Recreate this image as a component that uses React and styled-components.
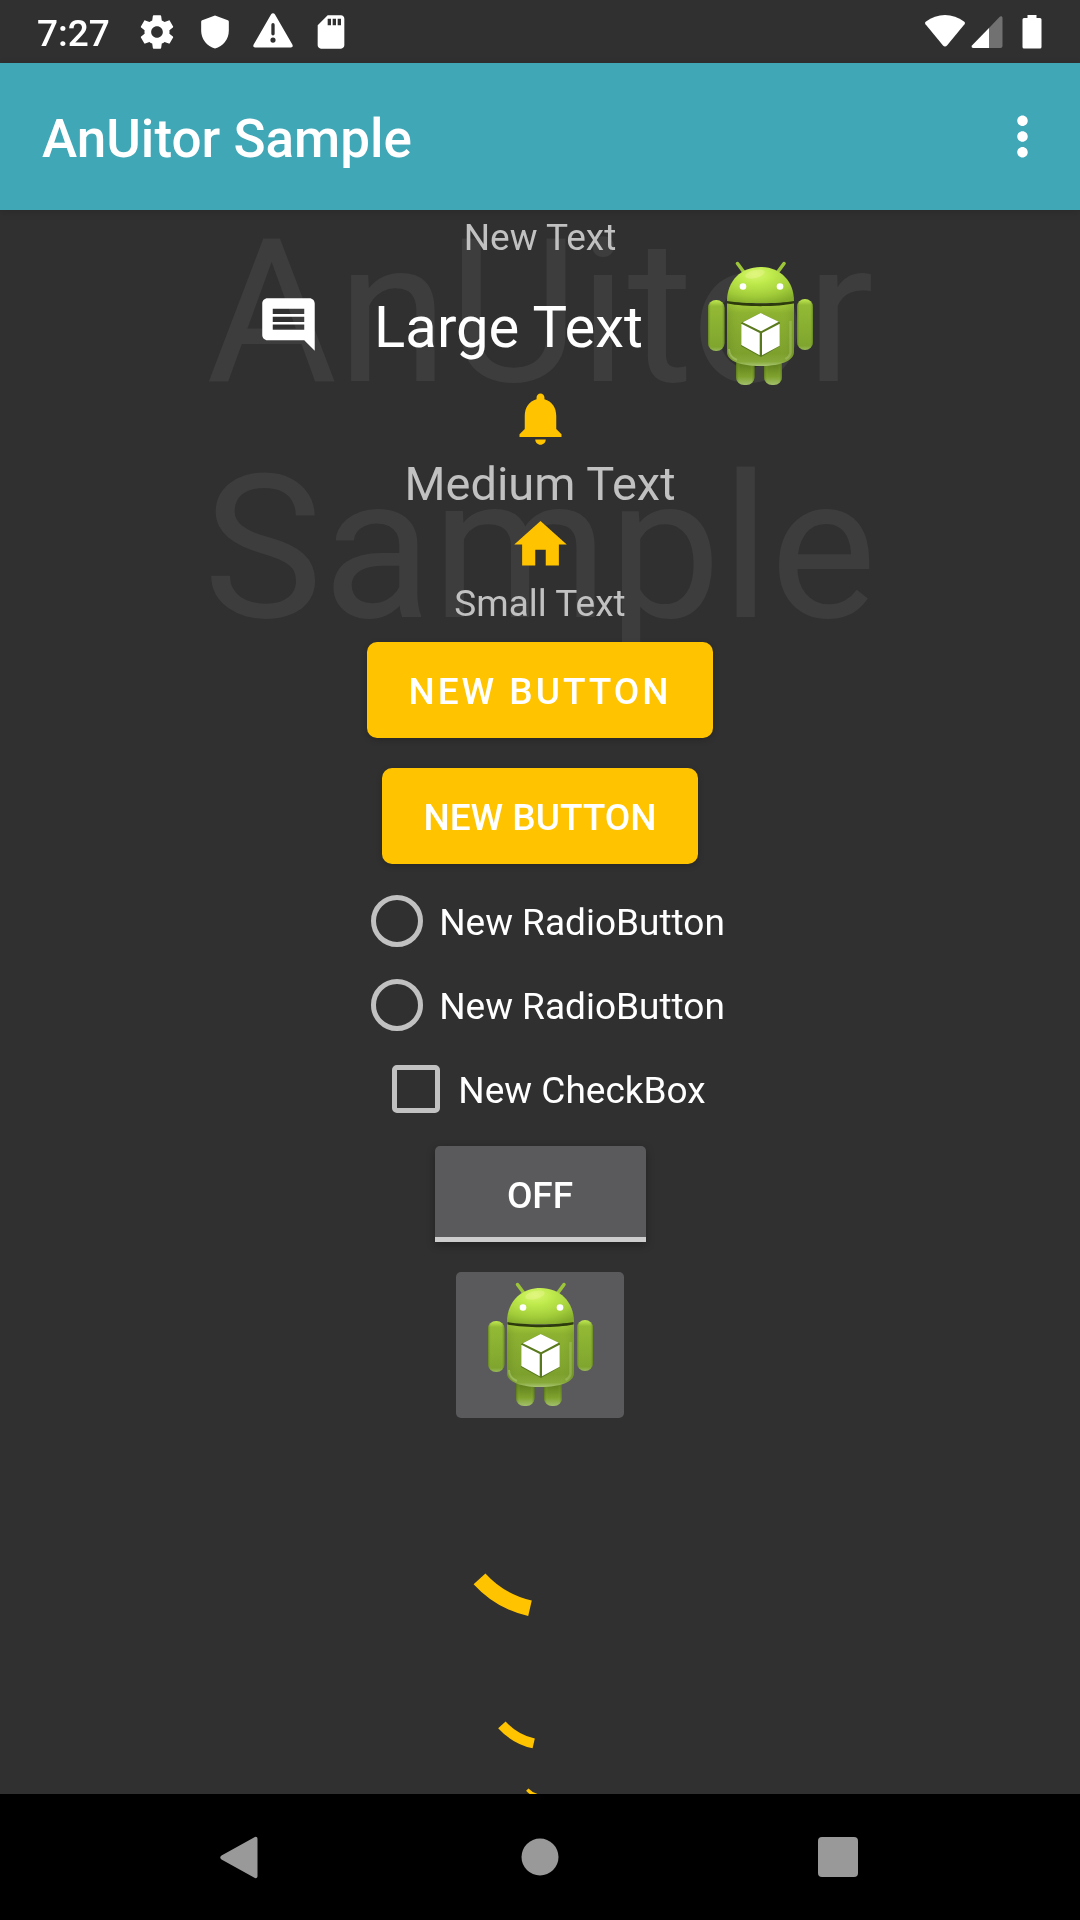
import React from "react";
import styled, { createGlobalStyle, css } from "styled-components";

const color = {
  background: "#303030",
  primary: "#40a7b7",
  accent: "#ffc300",
  text: "#ffffff",
  textSecondary: "#c1c1c1",
  control: "#5a5a5c",
  watermark: "#3d3d3d",
  nav: "#999999",
};

const GlobalStyle = createGlobalStyle`
  * { box-sizing: border-box; }
  body {
    margin: 0;
    background: ${color.background};
    color: ${color.text};
    font-family: Roboto, "Noto Sans", sans-serif;
    font-size: 37px;
  }
  button, input { font: inherit; color: inherit; }
  svg { display: block; flex: none; }
`;

const Screen = styled.div`
  display: flex;
  flex-direction: column;
  height: 100vh;
  overflow: hidden;
`;

const StatusBar = styled.div`
  flex: none;
  display: flex;
  align-items: center;
  justify-content: space-between;
  height: 63px;
  padding: 0 38px 0 37px;
`;

const StatusGroup = styled.div`
  display: flex;
  align-items: center;
  gap: ${(p) => p.$gap}px;
`;

const Clock = styled.time`
  padding: 4px 9px 0 0;
  font-weight: 500;
  line-height: 44px;
`;

const AppBar = styled.header`
  position: relative;
  z-index: 1;
  flex: none;
  display: flex;
  align-items: center;
  justify-content: space-between;
  height: 147px;
  padding: 0 26px 0 42px;
  background: ${color.primary};
  box-shadow: 0 2px 8px rgba(0, 0, 0, 0.15);
`;

const Title = styled.h1`
  margin: 0;
  padding-top: 4px;
  font-size: 53px;
  font-weight: 500;
  line-height: 64px;
`;

const IconButton = styled.button`
  padding: 0;
  border: 0;
  background: none;
`;

const Scroller = styled.main`
  flex: 1;
  min-height: 0;
  overflow-y: auto;
  scrollbar-width: none;
`;

const Content = styled.div`
  position: relative;
  display: flex;
  flex-direction: column;
  align-items: center;
`;

const Watermark = styled.div`
  position: absolute;
  z-index: -1;
  top: -15px;
  left: 0;
  right: 0;
  color: ${color.watermark};
  font-size: 201px;
  line-height: 236px;
  text-align: center;
`;

const SmallText = styled.div`
  padding-top: 4px;
  color: ${color.textSecondary};
  line-height: 47px;
`;

const MediumText = styled.div`
  padding-top: 5px;
  color: ${color.textSecondary};
  font-size: 47px;
  line-height: 58px;
`;

const LargeRow = styled.div`
  display: flex;
  align-items: center;
  gap: 54px;
`;

const LargeText = styled.div`
  padding-top: 6px;
  font-size: 58px;
  line-height: 70px;
`;

const surface = css`
  margin: 15px 0;
  border: 0;
  border-radius: 5px;
  background: ${color.control};
`;

const RaisedButton = styled.button`
  ${surface}
  height: 96px;
  padding: 2px 41px 0;
  border-radius: 10px;
  background: ${color.accent};
  box-shadow: 0 2px 6px rgba(0, 0, 0, 0.2);
  font-weight: 500;
  letter-spacing: ${(p) => (p.$spaced ? "3px" : "normal")};
`;

const ToggleButton = styled.button`
  ${surface}
  min-width: 211px;
  height: 96px;
  padding: 7px 20px 0;
  border-bottom: 5px solid #cdcdcd;
  border-radius: 5px 5px 0 0;
  box-shadow: 0 3px 8px rgba(0, 0, 0, 0.3);
  font-weight: 500;
`;

const ImageButton = styled.button`
  ${surface}
  padding: 10px 21px;
`;

const Option = styled.label`
  display: flex;
  align-items: center;
  height: 84px;
`;

const OptionText = styled.span`
  padding-top: 3px;
  line-height: 44px;
`;

const optionMark = css`
  appearance: none;
  flex: none;
  border: 5px solid ${color.textSecondary};
`;

const Radio = styled.input`
  ${optionMark}
  width: 52px;
  height: 52px;
  margin: 0 16px;
  border-radius: 50%;
  &:checked {
    background: radial-gradient(${color.accent} 50%, transparent 52%);
  }
`;

const CheckBox = styled.input`
  ${optionMark}
  width: 48px;
  height: 48px;
  margin: 0 18px;
  border-radius: 5px;
  &:checked {
    background: ${color.accent};
  }
`;

const NavBar = styled.nav`
  flex: none;
  display: flex;
  align-items: center;
  justify-content: space-between;
  height: 126px;
  padding: 0 210px;
  background: #000;
`;

function Icon({ size = 63, fill = "currentColor", d }) {
  return (
    <svg width={size} height={size} viewBox="0 0 24 24" fill={fill} aria-hidden="true">
      <path fillRule="evenodd" d={d} />
    </svg>
  );
}

const paths = {
  settings:
    "M19.43 12.98c.04-.32.07-.64.07-.98s-.03-.66-.07-.98l2.11-1.65c.19-.15.24-.42.12-.64l-2-3.46c-.12-.22-.39-.3-.61-.22l-2.49 1c-.52-.4-1.08-.73-1.69-.98l-.38-2.65C14.46 2.18 14.25 2 14 2h-4c-.25 0-.46.18-.49.42l-.38 2.65c-.61.25-1.17.59-1.69.98l-2.49-1c-.23-.09-.49 0-.61.22l-2 3.46c-.13.22-.07.49.12.64l2.11 1.65c-.04.32-.07.65-.07.98s.03.66.07.98l-2.11 1.65c-.19.15-.24.42-.12.64l2 3.46c.12.22.39.3.61.22l2.49-1c.52.4 1.08.73 1.69.98l.38 2.65c.03.24.24.42.49.42h4c.25 0 .46-.18.49-.42l.38-2.65c.61-.25 1.17-.59 1.69-.98l2.49 1c.23.09.49 0 .61-.22l2-3.46c.12-.22.07-.49-.12-.64zM12 15.5c-1.93 0-3.5-1.57-3.5-3.5s1.57-3.5 3.5-3.5 3.5 1.57 3.5 3.5-1.57 3.5-3.5 3.5z",
  shield:
    "M12 2.1 4.3 5c-.4.2-.6.5-.6.9v5.3c0 5 3.5 9.4 8.3 10.7 4.8-1.3 8.3-5.7 8.3-10.7V5.9c0-.4-.2-.7-.6-.9z",
  warning:
    "M1.3 21.3h21.4c1.1 0 1.4-.9.9-1.8L13.2 1.5c-.6-1-1.8-1-2.4 0L.4 19.5c-.5.9-.2 1.800.9 1.800zM11 7.600q0-1 1-1t1 1v5.500q0 1-1 1t-1-1zM12 15.300a1.550 1.550 0 1 0 0 3.100a1.550 1.550 0 0 0 0-3.100z",
  sdCard:
    "M18 2h-8L4.02 8 4 20c0 1.1.9 2 2 2h12c1.1 0 2-.9 2-2V4c0-1.1-.9-2-2-2zm-6 6h-2V4h2v4zm3 0h-2V4h2v4zm3 0h-2V4h2v4z",
  more:
    "M12 8c1.1 0 2-.9 2-2s-.9-2-2-2-2 .9-2 2 .9 2 2 2zm0 2c-1.1 0-2 .9-2 2s.9 2 2 2 2-.9 2-2-.9-2-2-2zm0 6c-1.1 0-2 .9-2 2s.9 2 2 2 2-.9 2-2-.9-2-2-2z",
  comment:
    "M21.99 4c0-1.1-.89-2-1.99-2H4c-1.1 0-2 .9-2 2v12c0 1.1.9 2 2 2h14l4 4-.01-18zM18 14H6v-2h12v2zm0-3H6V9h12v2zm0-3H6V6h12v2z",
  bell:
    "M12 22c1.1 0 2-.9 2-2h-4c0 1.1.9 2 2 2zm6-6v-5c0-3.07-1.64-5.64-4.5-6.32V4c0-.83-.67-1.5-1.5-1.5s-1.5.67-1.5 1.5v.68C7.63 5.36 6 7.92 6 11v5l-2 2v1h16v-1l-2-2z",
  home: "M10 20v-6h4v6h5v-8h3L12 3 2 12h3v8z",
};

function WifiIcon() {
  return (
    <svg width="42" height="36" viewBox="0 0 42 36" fill="#fff" aria-hidden="true">
      <path d="M2 7.5C13-1.200 29-1.200 40 7.500c1.200 1 1.200 1.800.5 2.700L23 31.500c-1.200 1.400-2.800 1.400-4 0L1.500 10.200C.8 9.300.8 8.500 2 7.500z" />
    </svg>
  );
}

function SignalIcon() {
  return (
    <svg width="32" height="36" viewBox="0 0 32 36" fill="#fff" aria-hidden="true">
      <path fill="#717171" d="M18 14 28.5 3c1.2-1.200 3-.7 3 1v28q0 2-2 2H18z" />
      <path d="M18 14v20H2.500C.6 34 0 32.500 1.200 31.200z" />
    </svg>
  );
}

function BatteryIcon() {
  return (
    <svg width="20" height="36" viewBox="0 0 20 36" fill="#fff" aria-hidden="true">
      <path d="M5.5 1h9v3H18q1.500 0 1.500 1.500v27.500q0 1.500-1.500 1.500H2Q.5 34.500.5 33V5.500Q.5 4 2 4h3.500z" />
    </svg>
  );
}

function Robot({ id }) {
  const url = (name) => `url(#${id}-${name})`;
  return (
    <svg width="126" height="126" viewBox="0 0 126 126" role="img" aria-label="Android">
      <defs>
        <radialGradient id={`${id}-head`} cx="0.42" cy="0.2" r="0.85">
          <stop offset="0" stopColor="#d6f76c" />
          <stop offset="0.3" stopColor="#bfea4c" />
          <stop offset="0.7" stopColor="#a3ce3a" />
          <stop offset="1" stopColor="#84ac2b" />
        </radialGradient>
        <linearGradient id={`${id}-body`} x1="0" y1="0" x2="0" y2="1">
          <stop offset="0" stopColor="#a2ca3b" />
          <stop offset="0.15" stopColor="#8db231" />
          <stop offset="0.8" stopColor="#7da02d" />
          <stop offset="0.93" stopColor="#86a93a" />
          <stop offset="1" stopColor="#a9c672" />
        </linearGradient>
        <linearGradient id={`${id}-limb`} x1="0" y1="0" x2="0" y2="1">
          <stop offset="0" stopColor="#c0ea50" />
          <stop offset="0.12" stopColor="#93ba35" />
          <stop offset="0.92" stopColor="#80a52e" />
          <stop offset="1" stopColor="#98b95a" />
        </linearGradient>
        <linearGradient id={`${id}-side`} x1="0" y1="0" x2="1" y2="0">
          <stop offset="0" stopColor="#4c6815" stopOpacity="0.6" />
          <stop offset="0.22" stopColor="#9cc43c" stopOpacity="0" />
          <stop offset="0.78" stopColor="#9cc43c" stopOpacity="0" />
          <stop offset="1" stopColor="#4c6815" stopOpacity="0.6" />
        </linearGradient>
        <linearGradient id={`${id}-leg`} x1="0" y1="0" x2="0" y2="1">
          <stop offset="0" stopColor="#5c7a1d" />
          <stop offset="0.3" stopColor="#64851f" />
          <stop offset="0.7" stopColor="#7fa22e" />
          <stop offset="1" stopColor="#a2bf6c" />
        </linearGradient>
      </defs>
      <path d="M40.5 2.500 47.500 12M87 2.500 80 12" stroke="#9cc53a" strokeWidth="3.500" strokeLinecap="round" />
      {[
        ["leg", 39, 96, 18.5, 28],
        ["leg", 67, 96, 18, 28],
        ["limb", 11, 39, 16.5, 51],
        ["limb", 100, 38, 16, 51],
      ].map(([kind, x, y, width, height]) => (
        <g key={x}>
          <rect x={x} y={y} width={width} height={height} rx="8" fill={url(kind)} />
          <rect x={x} y={y} width={width} height={height} rx="8" fill={url("side")} />
        </g>
      ))}
      <path d="M31 39c18 5 47 5 65 0v8H31z" fill="#2c3a0c" />
      <path d="M30 40C30 20 44 6 63.500 6S97 20 97 40C80 43 48 43 30 40z" fill={url("head")} />
      <ellipse cx="58" cy="13" rx="10" ry="4" fill="#f4f7a0" opacity="0.35" transform="rotate(-14 58 13)" />
      <path d="M30 42.500C48 46 80 46 97 42.500V91c0 9-14 14-33.500 14S30 100 30 91z" fill={url("body")} />
      <path d="M30 42.500C48 46 80 46 97 42.500V91c0 9-14 14-33.500 14S30 100 30 91z" fill={url("side")} opacity="0.35" />
      <path d="M93.500 60v32q-1 4-5 6" stroke="#c3dc94" strokeWidth="2.500" fill="none" opacity="0.3" />
      <path d="M32 88q0 8 8 11" stroke="#c3dc94" strokeWidth="2" fill="none" opacity="0.4" />
      <circle cx="46" cy="25.500" r="3.300" fill="#fff" />
      <circle cx="83" cy="25.500" r="3.300" fill="#fff" />
      <path d="M63.700 52 83 61.500V85L64 96 44 85V62z" fill="#4b6a18" opacity="0.75" />
      <path
        d="M63.700 52 81.700 60.700 64 70.300 45.700 61.300zM44.300 62.700 62.700 72V94.300L44.300 84zM65 72 82.700 62.700V84.700L65 94.300z"
        fill="#fff"
      />
    </svg>
  );
}

function Spinner({ size }) {
  return (
    <svg width={size} height={size} viewBox="0 0 200 200" role="progressbar" aria-label="Loading">
      <path d="M39.5 145.800A97.700 97.700 0 0 0 90 175.300" fill="none" stroke={color.accent} strokeWidth="16" />
    </svg>
  );
}

export default function App() {
  return (
    <>
      <GlobalStyle />
      <Screen>
        <StatusBar>
          <StatusGroup $gap={18}>
            <Clock>7:27</Clock>
            <Icon size={40} d={paths.settings} />
            <Icon size={40} d={paths.shield} />
            <Icon size={40} d={paths.warning} />
            <Icon size={40} d={paths.sdCard} />
          </StatusGroup>
          <StatusGroup $gap={5}>
            <WifiIcon />
            <StatusGroup $gap={19}>
              <SignalIcon />
              <BatteryIcon />
            </StatusGroup>
          </StatusGroup>
        </StatusBar>

        <AppBar>
          <Title>AnUitor Sample</Title>
          <IconButton type="button" aria-label="More options">
            <Icon d={paths.more} />
          </IconButton>
        </AppBar>

        <Scroller>
          <Content>
            <Watermark>
              AnUitor
              <br />
              Sample
            </Watermark>
            <SmallText>New Text</SmallText>
            <LargeRow>
              <Icon d={paths.comment} />
              <LargeText>Large Text</LargeText>
              <Robot id="row" />
            </LargeRow>
            <Icon fill={color.accent} d={paths.bell} />
            <MediumText>Medium Text</MediumText>
            <Icon fill={color.accent} d={paths.home} />
            <SmallText>Small Text</SmallText>
            <RaisedButton type="button" $spaced>
              NEW BUTTON
            </RaisedButton>
            <RaisedButton type="button">NEW BUTTON</RaisedButton>
            <Option>
              <Radio type="radio" name="first" />
              <OptionText>New RadioButton</OptionText>
            </Option>
            <Option>
              <Radio type="radio" name="second" />
              <OptionText>New RadioButton</OptionText>
            </Option>
            <Option>
              <CheckBox type="checkbox" />
              <OptionText>New CheckBox</OptionText>
            </Option>
            <ToggleButton type="button" aria-pressed="false">
              OFF
            </ToggleButton>
            <ImageButton type="button">
              <Robot id="button" />
            </ImageButton>
            <Spinner size={200} />
            <Spinner size={126} />
            <Spinner size={42} />
          </Content>
        </Scroller>

        <NavBar>
          <IconButton type="button" aria-label="Back">
            <svg width="63" height="63" viewBox="0 0 63 63" fill={color.nav}>
              <path d="M44 11.500c2-1.300 3.500-.5 3.500 1.500v37c0 2-1.500 2.800-3.500 1.500L11.500 33.500c-1.700-1.300-1.700-2.700 0-4z" />
            </svg>
          </IconButton>
          <IconButton type="button" aria-label="Home">
            <svg width="63" height="63" viewBox="0 0 63 63" fill={color.nav}>
              <circle cx="31" cy="31" r="18.500" />
            </svg>
          </IconButton>
          <IconButton type="button" aria-label="Recent apps">
            <svg width="63" height="63" viewBox="0 0 63 63" fill={color.nav}>
              <rect x="11" y="11" width="40" height="40" rx="4" />
            </svg>
          </IconButton>
        </NavBar>
      </Screen>
    </>
  );
}
